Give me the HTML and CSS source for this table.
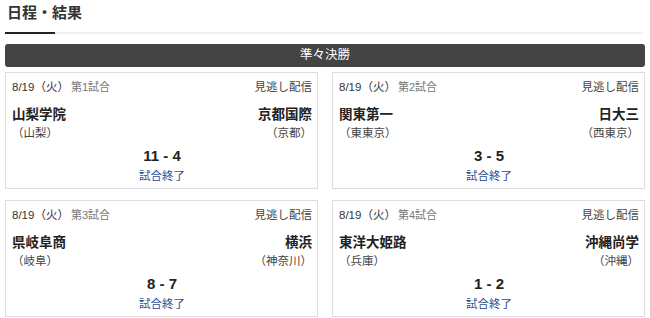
FILE: index.html
```html
<!DOCTYPE html>
<html lang="ja">
<head>
<meta charset="utf-8">
<link rel="stylesheet" href="styles.css">
</head>
<body>
<div class="page">
  <h2 class="title">日程・結果</h2>
  <div class="rule"><span class="rule-accent"></span></div>
  <div class="round">準々決勝</div>
  <div class="grid">
    <div class="card">
      <div class="meta"><span class="date">8/19（火）</span><span class="no">第1試合</span><span class="vod">見逃し配信</span></div>
      <div class="teams"><span class="team">山梨学院</span><span class="team">京都国際</span></div>
      <div class="prefs"><span>（山梨）</span><span>（京都）</span></div>
      <div class="score">11 - 4</div>
      <div class="status">試合終了</div>
    </div>
    <div class="card">
      <div class="meta"><span class="date">8/19（火）</span><span class="no">第2試合</span><span class="vod">見逃し配信</span></div>
      <div class="teams"><span class="team">関東第一</span><span class="team">日大三</span></div>
      <div class="prefs"><span>（東東京）</span><span>（西東京）</span></div>
      <div class="score">3 - 5</div>
      <div class="status">試合終了</div>
    </div>
    <div class="card">
      <div class="meta"><span class="date">8/19（火）</span><span class="no">第3試合</span><span class="vod">見逃し配信</span></div>
      <div class="teams"><span class="team">県岐阜商</span><span class="team">横浜</span></div>
      <div class="prefs"><span>（岐阜）</span><span>（神奈川）</span></div>
      <div class="score">8 - 7</div>
      <div class="status">試合終了</div>
    </div>
    <div class="card">
      <div class="meta"><span class="date">8/19（火）</span><span class="no">第4試合</span><span class="vod">見逃し配信</span></div>
      <div class="teams"><span class="team">東洋大姫路</span><span class="team">沖縄尚学</span></div>
      <div class="prefs"><span>（兵庫）</span><span>（沖縄）</span></div>
      <div class="score">1 - 2</div>
      <div class="status">試合終了</div>
    </div>
  </div>
</div>
</body>
</html>
```
FILE: styles.css
```css
* { box-sizing: border-box; }
html, body { margin: 0; padding: 0; background: #fff; }
body {
  font-family: "Liberation Sans", "Noto Sans CJK JP", sans-serif;
  color: #333;
}
.page { padding: 0 5px; }
.title {
  margin: 0;
  padding: 3px 0 0 2px;
  font-size: 15px;
  line-height: 20px;
  font-weight: bold;
  color: #333;
  height: 32px;
}
.rule {
  height: 2px;
  background: #f0f0f0;
  margin-right: 2px;
}
.rule-accent {
  display: block;
  width: 50px;
  height: 2px;
  background: #222;
}
.round {
  margin-top: 10px;
  height: 23px;
  background: #444;
  border-radius: 3px;
  color: #fff;
  font-size: 12.5px;
  line-height: 23px;
  text-align: center;
}
.grid {
  margin-top: 5px;
  display: grid;
  grid-template-columns: 313px 313px;
  column-gap: 14px;
  row-gap: 11px;
}
.card {
  border: 1px solid #ddd;
  padding: 6px 5px 4px 6px;
  height: 117px;
}
.meta {
  display: flex;
  font-size: 11px;
  line-height: 16px;
}
.date { color: #333; font-size: 11.5px; }
.no { color: #777; margin-left: 2px; }
.vod { margin-left: auto; color: #444; font-size: 11.5px; }
.teams {
  margin-top: 11px;
  display: flex;
  justify-content: space-between;
  font-size: 13.5px;
  font-weight: bold;
  line-height: 18px;
  color: #222;
}
.prefs {
  margin-top: 1px;
  display: flex;
  justify-content: space-between;
  font-size: 11.5px;
  line-height: 16px;
  color: #444;
}
.score {
  margin-top: 6px;
  text-align: center;
  font-size: 15px;
  font-weight: bold;
  line-height: 18px;
  color: #222;
}
.status {
  margin-top: 3px;
  text-align: center;
  font-size: 11.5px;
  line-height: 16px;
  color: #2b4f93;
}
```
